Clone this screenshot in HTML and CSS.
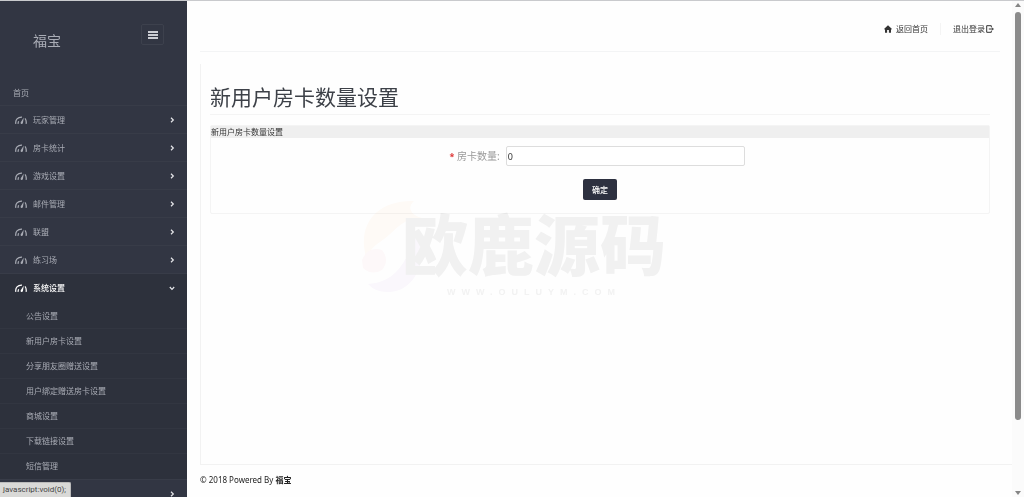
FILE: index.html
```
<!DOCTYPE html>
<html lang="zh-CN">
<head>
    <meta charset="UTF-8">
    <meta name="viewport" content="width=device-width, initial-scale=1.0">
    <title>新用户房卡数量设置</title>
    <link rel="stylesheet" href="styles.css">
</head>
<body>
    <!-- 图标 -->
    <svg class="icon-defs" aria-hidden="true">
        <symbol id="icon-gauge" viewBox="0 0 12 10">
            <path d="M.8 8.800C.2 5 2.600 1.900 7 2.100M10 3.400Q11.700 5.500 11.100 8.800M3.200 8.800Q3 7.300 3.700 6.200" fill="none" stroke="currentColor" stroke-width="1.200"/>
            <path d="M8.800 2.600L7.900 8.200Q7 9.400 5.900 8.700Q5.300 8 5.900 7Z" fill="currentColor"/>
        </symbol>
        <symbol id="icon-chevron" viewBox="0 0 6 6">
            <path d="M2 .8L4.300 3L2 5.200" fill="none" stroke="currentColor" stroke-width="1.200"/>
        </symbol>
    </svg>

    <!-- 左侧菜单 -->
    <nav class="sidebar">
        <div class="brand">
            <span class="brand-name">福宝</span>
            <button class="menu-toggle" type="button" aria-label="菜单">
                <svg viewBox="0 0 10 8"><path d="M0 1H10M0 4H10M0 7H10" stroke="currentColor" stroke-width="1.800"/></svg>
            </button>
        </div>
        <a class="menu-home" href="#">首页</a>
        <ul class="menu">
            <li><a href="#"><svg class="gauge"><use href="#icon-gauge"/></svg><span>玩家管理</span><svg class="chevron"><use href="#icon-chevron"/></svg></a></li>
            <li><a href="#"><svg class="gauge"><use href="#icon-gauge"/></svg><span>房卡统计</span><svg class="chevron"><use href="#icon-chevron"/></svg></a></li>
            <li><a href="#"><svg class="gauge"><use href="#icon-gauge"/></svg><span>游戏设置</span><svg class="chevron"><use href="#icon-chevron"/></svg></a></li>
            <li><a href="#"><svg class="gauge"><use href="#icon-gauge"/></svg><span>邮件管理</span><svg class="chevron"><use href="#icon-chevron"/></svg></a></li>
            <li><a href="#"><svg class="gauge"><use href="#icon-gauge"/></svg><span>联盟</span><svg class="chevron"><use href="#icon-chevron"/></svg></a></li>
            <li><a href="#"><svg class="gauge"><use href="#icon-gauge"/></svg><span>练习场</span><svg class="chevron"><use href="#icon-chevron"/></svg></a></li>
            <li class="active">
                <a href="#"><svg class="gauge"><use href="#icon-gauge"/></svg><span>系统设置</span><svg class="chevron"><use href="#icon-chevron"/></svg></a>
                <ul class="submenu">
                    <li><a href="#">公告设置</a></li>
                    <li><a href="#">新用户房卡设置</a></li>
                    <li><a href="#">分享朋友圈赠送设置</a></li>
                    <li><a href="#">用户绑定赠送房卡设置</a></li>
                    <li><a href="#">商城设置</a></li>
                    <li><a href="#">下载链接设置</a></li>
                    <li><a href="#">短信管理</a></li>
                </ul>
            </li>
            <li><a href="#" aria-label="更多"><span></span><svg class="chevron"><use href="#icon-chevron"/></svg></a></li>
        </ul>
    </nav>

    <!-- 右侧内容 -->
    <div class="main">
        <header class="topbar">
            <a href="#">
                <svg class="home" viewBox="0 0 8 8"><path d="M4 .3L8 4L7.300 4.600L7 4.400V7.700H4.900V5H3.100V7.700H1V4.400L.7 4.600L0 4Z" fill="currentColor"/></svg>
                返回首页
            </a>
            <a class="logout" href="#">
                退出登录
                <svg viewBox="0 0 8 8"><path d="M5.300 2V.7H.7V7.300H5.300V6M2.800 4H7.200M5.800 2.500L7.300 4L5.800 5.500" fill="none" stroke="currentColor"/></svg>
            </a>
        </header>

        <main class="content">
            <h1>新用户房卡数量设置</h1>
            <section class="panel">
                <h2>新用户房卡数量设置</h2>
                <form>
                    <div class="field">
                        <label for="cardCount"><b>*</b> 房卡数量:</label>
                        <input type="text" id="cardCount" name="cardCount" value="0">
                    </div>
                    <button class="submit" type="button">确定</button>
                </form>
            </section>
        </main>

        <footer>© 2018 Powered By <b>福宝</b></footer>

        <!-- 水印 -->
        <div class="watermark">
            <svg viewBox="0 0 70 96">
                <path d="M4 48C2 20 22 2 54 3C46 10 52 18 62 20C40 20 36 34 20 44Q10 50 6 62Z" fill="#fffbf7"/>
                <path d="M2 62Q8 48 22 52Q30 62 22 72Q12 78 3 70Z" fill="#fef9fa"/>
                <path d="M8 86C38 84 46 62 58 34C68 62 56 92 30 94Q16 95 8 86Z" fill="#fbf8fd"/>
            </svg>
            <div class="watermark-text">
                <strong>欧鹿源码</strong>
                <span>WWW.OULUYM.COM</span>
            </div>
        </div>
    </div>

    <!-- 滚动条 -->
    <div class="scrollbar">
        <i class="arrow-up"></i>
        <i class="thumb"></i>
        <i class="arrow-down"></i>
    </div>

    <div class="status">javascript:void(0);</div>
</body>
</html>
```
FILE: styles.css
```
* {
    box-sizing: border-box;
}
body {
    display: flex;
    height: 100vh;
    margin: 0;
    overflow: hidden;
    border-top: 1px solid #c9cacd;
    background: #fefefe;
    color: #333;
    font-family: "Noto Sans", "Noto Sans CJK SC", sans-serif;
    font-size: 8px;
    line-height: 12px;
}
a {
    color: inherit;
    text-decoration: none;
}
ul {
    margin: 0;
    padding: 0;
    list-style: none;
}
.icon-defs {
    position: absolute;
    width: 0;
    height: 0;
}

/* 左侧菜单 */
.sidebar {
    flex: none;
    width: 187px;
    overflow: hidden;
    background: #323643;
    color: #a9acb5;
}
.brand {
    display: flex;
    justify-content: space-between;
    padding: 23px 23px 0 33px;
    height: 78px;
}
.brand-name {
    padding-top: 7px;
    font-size: 14px;
    line-height: 20px;
}
.menu-toggle {
    display: flex;
    align-items: center;
    justify-content: center;
    width: 23px;
    height: 21px;
    padding: 0;
    border: 1px solid #3d414d;
    border-radius: 2px;
    background: none;
    color: #cbcdd3;
}
.menu-toggle svg {
    width: 10px;
    height: 8px;
}
.menu-home {
    display: block;
    padding: 8px 13px 6px;
}
.menu > li > a {
    display: flex;
    align-items: center;
    height: 28px;
    padding: 0 12px 0 15px;
    border-top: 1px solid #383c48;
}
.gauge {
    width: 12px;
    height: 10px;
    margin-right: 6px;
}
.chevron {
    width: 6px;
    height: 6px;
    margin-left: auto;
    color: #e6e7ea;
}
.menu > .active {
    background: #2d313c;
}
.menu > .active > a {
    height: 29px;
    color: #fff;
    font-weight: 500;
}
.active .chevron {
    transform: rotate(90deg);
}
.submenu {
    padding: 1px 0;
}
.submenu a {
    display: flex;
    align-items: center;
    height: 25px;
    padding-left: 26px;
}
.submenu li + li a {
    border-top: 1px solid #323641;
}

/* 右侧内容 */
.main {
    position: relative;
    display: flex;
    flex: 1;
    flex-direction: column;
    padding-left: 13px;
}
.topbar {
    display: flex;
    align-items: center;
    justify-content: flex-end;
    height: 51px;
    margin-right: 12px;
    padding: 6px 6px 0 0;
    border-bottom: 1px solid #f3f4f5;
}
.topbar a {
    display: flex;
    align-items: center;
    gap: 4px;
}
.topbar svg {
    width: 8px;
    height: 8px;
}
.topbar .logout {
    gap: 1px;
    margin-left: 12px;
    padding-left: 12px;
    border-left: 1px solid #f4f4f4;
}
.content {
    flex: 1;
    margin-top: 12px;
    padding: 19px 22px 0 9px;
    border: solid #f2f2f2;
    border-width: 0 0 1px 1px;
}
h1 {
    margin: 0 0 10px;
    padding-bottom: 3px;
    border-bottom: 1px solid #f4f4f4;
    color: #3d4148;
    font-size: 21px;
    font-weight: 400;
    line-height: 28px;
}
.panel {
    border: 1px solid #f4f4f4;
    border-radius: 2px;
}
h2 {
    margin: 0;
    background: #efefef;
    font-size: 8px;
    font-weight: 400;
    line-height: 12px;
}
form {
    display: flex;
    flex-direction: column;
    align-items: center;
    gap: 13px;
    padding: 8px 0 13px;
}
.field {
    display: flex;
    align-items: center;
    justify-content: center;
    gap: 6px;
    width: 100%;
    padding-right: 5px;
}
.field label {
    color: #999;
    font-size: 10px;
}
.field b {
    color: #d33;
    font-size: 9px;
}
.field input {
    width: 31%;
    height: 20px;
    padding: 0 1px;
    border: 1px solid #ddd;
    border-radius: 2px;
    background: #fff;
    color: #333;
    font: inherit;
    font-size: 9px;
}
.submit {
    height: 21px;
    padding: 0 9px;
    border: 0;
    border-radius: 2px;
    background: #2d3140;
    color: #fff;
    font: inherit;
    font-weight: 500;
}
footer {
    padding: 9px 0 11px;
    color: #222;
}

/* 水印 */
.watermark {
    position: absolute;
    top: 194px;
    left: 173px;
    display: flex;
    align-items: center;
    pointer-events: none;
    mix-blend-mode: multiply;
}
.watermark svg {
    width: 70px;
    height: 96px;
    margin-right: -28px;
}
.watermark-text {
    display: flex;
    flex-direction: column;
    align-items: center;
    color: #f2f2f2;
}
.watermark strong {
    font-family: "Noto Sans CJK SC", sans-serif;
    font-size: 66px;
    font-weight: 900;
    line-height: 92px;
}
.watermark span {
    color: #f3f3f3;
    font-family: "Liberation Sans", sans-serif;
    font-size: 9px;
    font-weight: 700;
    letter-spacing: 6px;
    line-height: 10px;
}

/* 滚动条 */
.scrollbar {
    display: flex;
    flex: none;
    flex-direction: column;
    align-items: center;
    width: 12px;
    padding: 2px 0;
    background: #fbfbfb;
}
.arrow-up,
.arrow-down {
    border: 3px solid transparent;
}
.arrow-up {
    border-top: 0;
    border-bottom: 4px solid #858585;
}
.arrow-down {
    margin-top: auto;
    border-top: 4px solid #858585;
    border-bottom: 0;
}
.thumb {
    width: 6px;
    height: 83%;
    margin-top: 5px;
    border-radius: 3px;
    background: #8b8b8b;
}

/* 浏览器状态栏 */
.status {
    position: fixed;
    bottom: 0;
    left: 0;
    padding: 1px 4px 1px 3px;
    border: 1px solid #bbb;
    border-width: 1px 1px 0 0;
    border-radius: 0 2px 0 0;
    background: #d9d9d7;
    color: #444;
    font-family: Roboto, sans-serif;
}
```
